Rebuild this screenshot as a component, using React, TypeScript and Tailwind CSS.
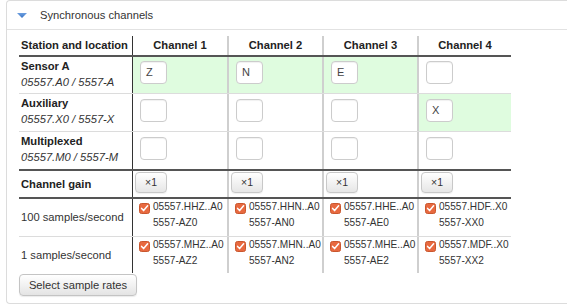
import React from 'react';

const GRID = 'grid grid-cols-[114px_96px_95px_95px_92px]';

const LINES = [
  'border-r border-[#333]',
  'border-r-2 border-[#cfcfcf]',
  'border-r-2 border-[#cfcfcf]',
  'border-r-2 border-[#cfcfcf]',
  '',
];

const stations = [
  { name: 'Sensor A', code: '05557.A0 / 5557-A', values: ['Z', 'N', 'E', ''], height: 'h-[37px]', pad: 'pt-[4px]' },
  { name: 'Auxiliary', code: '05557.X0 / 5557-X', values: ['', '', '', 'X'], height: 'h-[38px]', pad: 'pt-[5px]' },
  { name: 'Multiplexed', code: '05557.M0 / 5557-M', values: ['', '', '', ''], height: 'h-[39px]', pad: 'pt-[5px]' },
];

const greens = [
  [true, true, true, false],
  [false, false, false, true],
  [false, false, false, false],
];

const rates = [
  {
    label: '100 samples/second',
    streams: [
      ['05557.HHZ..A0', '5557-AZ0'],
      ['05557.HHN..A0', '5557-AN0'],
      ['05557.HHE..A0', '5557-AE0'],
      ['05557.HDF..X0', '5557-XX0'],
    ],
  },
  {
    label: '1 samples/second',
    streams: [
      ['05557.MHZ..A0', '5557-AZ2'],
      ['05557.MHN..A0', '5557-AN2'],
      ['05557.MHE..A0', '5557-AE2'],
      ['05557.MDF..X0', '5557-XX2'],
    ],
  },
];

function Checked() {
  return (
    <svg width="11" height="11" viewBox="0 0 11 11" className="shrink-0">
      <rect x="0.5" y="0.5" width="10" height="10" rx="2" fill="#e8693f" stroke="#c9572f" />
      <path d="M2.6 5.4 L4.6 7.6 L8.6 2.8" fill="none" stroke="#fff" strokeWidth="1.5" strokeLinecap="round" strokeLinejoin="round" />
    </svg>
  );
}

function GainButton() {
  return (
    <button className="w-[32px] h-[21px] rounded-[4px] border border-[#c8c8c8] bg-gradient-to-b from-white to-[#e6e6e6] text-[10.5px] text-[#333] shadow-[0_1px_1px_rgba(0,0,0,0.06)]">
      ×1
    </button>
  );
}

export default function App() {
  return (
    <div className="w-[567px] h-[305px] bg-white font-['Liberation_Sans',Arial,sans-serif] text-[11.2px] text-[#333] overflow-hidden">
      <div className="ml-[6px] h-[304px] border-l border-t border-b border-[#dcdcdc] rounded-bl-[4px] rounded-tl-[4px]">
        {/* Panel header */}
        <div className="h-[29px] border-b border-[#e2e2e2] flex items-center pl-[10px]">
          <svg width="10" height="5" viewBox="0 0 10 5" className="mt-[1px]">
            <defs>
              <linearGradient id="tri" x1="0" y1="0" x2="0" y2="1">
                <stop offset="0" stopColor="#6d9fe0" />
                <stop offset="1" stopColor="#3a74c4" />
              </linearGradient>
            </defs>
            <polygon points="0,0 10,0 5,5" fill="url(#tri)" />
          </svg>
          <span className="ml-[13px] text-[#333]">Synchronous channels</span>
        </div>

        <div className="pl-[12px] pt-[6px]">
          <div className="w-[492px]">
            {/* Column headings */}
            <div className={`${GRID} h-[21px] border-b-2 border-[#555] font-bold text-[#222]`}>
              <div className={`${LINES[0]} pl-[2px] flex items-center whitespace-nowrap`}>Station and location</div>
              {['Channel 1', 'Channel 2', 'Channel 3', 'Channel 4'].map((c, i) => (
                <div key={c} className={`${LINES[i + 1]} flex items-center justify-center`}>
                  {c}
                </div>
              ))}
            </div>

            {/* Stations */}
            {stations.map((s, r) => (
              <div
                key={s.name}
                className={`${GRID} ${s.height} ${r === 2 ? 'border-b-2 border-[#555]' : 'border-b border-[#dcdcdc]'}`}
              >
                <div className={`${LINES[0]} pl-[2px] pt-[1px] flex flex-col leading-[16px]`}>
                  <span className="font-bold text-[#222]">{s.name}</span>
                  <span className="italic">{s.code}</span>
                </div>
                {s.values.map((v, i) => (
                  <div key={i} className={`${LINES[i + 1]} ${greens[r][i] ? 'bg-[#dffcdf]' : ''} ${s.pad} pl-[7px]`}>
                    <div className="w-[27px] h-[23px] rounded-[4px] border border-[#cccccc] bg-white shadow-[inset_0_1px_1px_rgba(0,0,0,0.06)] flex items-center pl-[5px] text-[11px] text-[#444]">
                      {v}
                    </div>
                  </div>
                ))}
              </div>
            ))}

            {/* Gain */}
            <div className={`${GRID} h-[28px] border-b-2 border-[#555]`}>
              <div className={`${LINES[0]} pl-[2px] flex items-center font-bold text-[#222]`}>Channel gain</div>
              {[0, 1, 2, 3].map((i) => (
                <div key={i} className={`${LINES[i + 1]} pt-[1px] pl-[2px]`}>
                  <GainButton />
                </div>
              ))}
            </div>

            {/* Sample rates */}
            {rates.map((rate, r) => (
              <div key={rate.label} className={`${GRID} ${r === 0 ? 'h-[38px] border-b border-[#dcdcdc]' : 'h-[36px]'}`}>
                <div className={`${LINES[0]} pl-[2px] flex items-center`}>{rate.label}</div>
                {rate.streams.map(([a, b], i) => (
                  <div key={a} className={`${LINES[i + 1]} pl-[6px] flex items-start gap-[3px] text-[10.1px] leading-[15.6px]`}>
                    <div className="pt-[4px]">
                      <Checked />
                    </div>
                    <div className="flex flex-col whitespace-nowrap">
                      <span>{a}</span>
                      <span>{b}</span>
                    </div>
                  </div>
                ))}
              </div>
            ))}
          </div>

          <button className="mt-[1px] w-[118px] h-[22px] rounded-[4px] border border-[#c4c4c4] bg-gradient-to-b from-white to-[#e4e4e4] text-[11.2px] text-[#333] shadow-[0_1px_1px_rgba(0,0,0,0.08)]">
            Select sample rates
          </button>
        </div>
      </div>
    </div>
  );
}
